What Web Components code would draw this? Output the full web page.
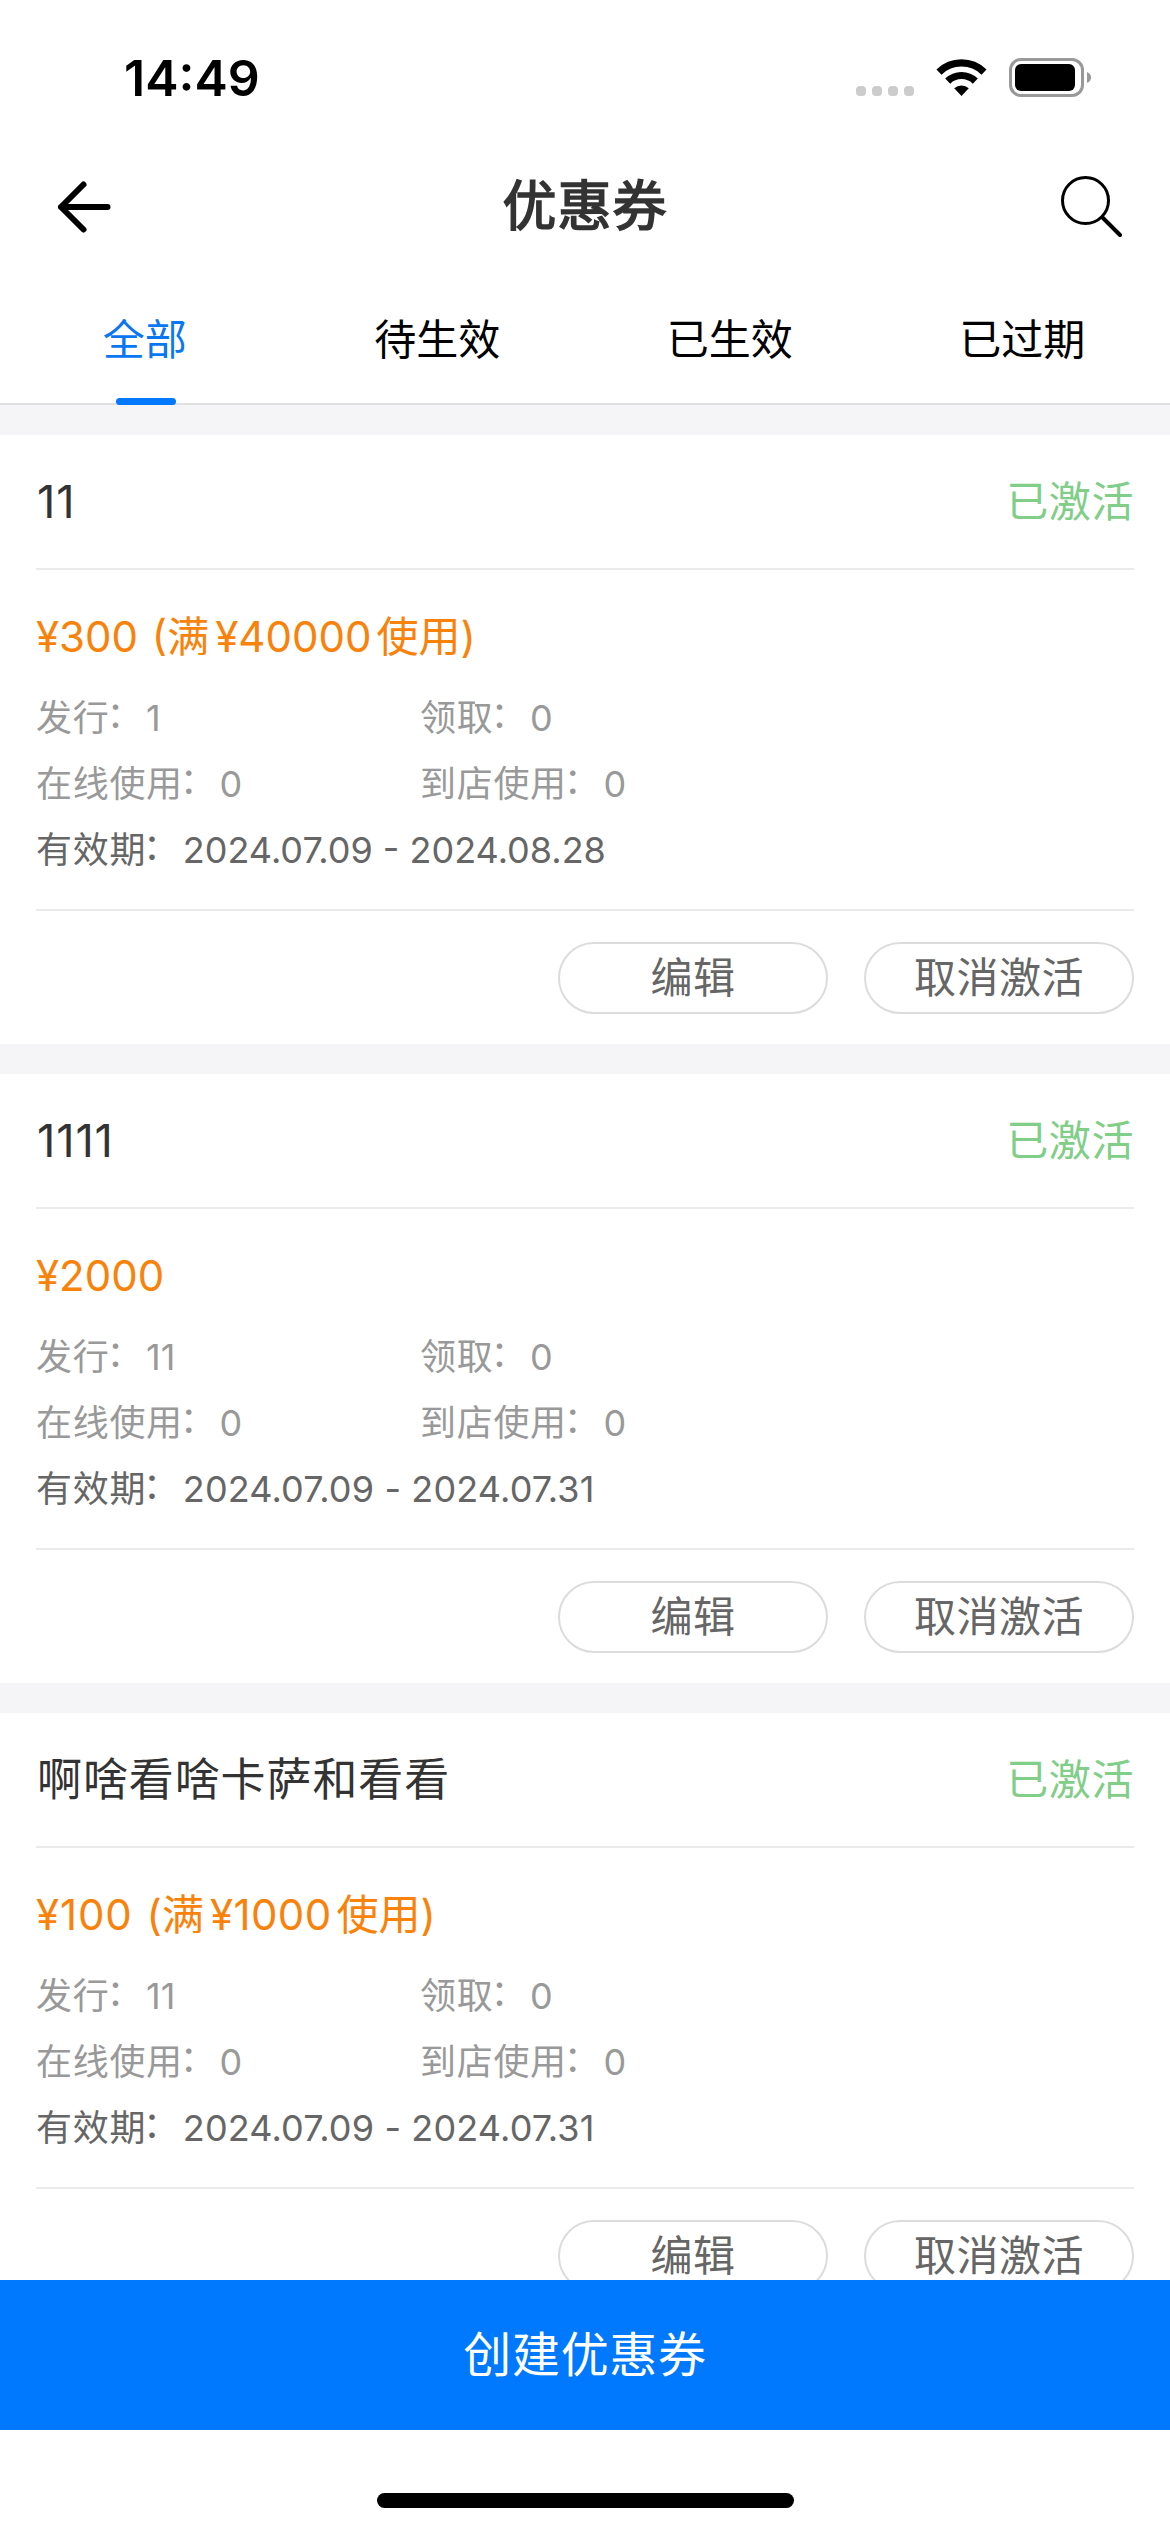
<!DOCTYPE html>
<html lang="zh-CN">
<head>
<meta charset="utf-8">
<title>优惠券</title>
<style>
html,body{margin:0;padding:0}
body{width:1170px;height:2532px;overflow:hidden;background:#fff;font-family:Inter,"Noto Sans CJK SC",sans-serif;color:#333}
</style>
</head>
<body>
<coupon-app></coupon-app>
<script>
const define = (name, html, init) => {
  const t = document.createElement('template');
  t.innerHTML = html;
  customElements.define(name, class extends HTMLElement {
    constructor() {
      super();
      this.attachShadow({ mode: 'open' }).append(t.content.cloneNode(true));
    }
    connectedCallback() { if (init) init(this, this.shadowRoot); }
  });
};

define('status-bar', `
<style>
:host{display:flex;height:156px;box-sizing:border-box;padding:0 79px 0 124px;justify-content:space-between;align-items:center}
.time{font-size:50px;line-height:60px;font-weight:600;color:#000}
svg{display:block}
</style>
<span class="time">14:49</span>
<svg width="236" height="44" viewBox="855 56 236 44">
  <g fill="#ccc"><rect x="856" y="86" width="10" height="10" rx="4"/><rect x="872" y="86" width="10" height="10" rx="4"/><rect x="888" y="86" width="10" height="10" rx="4"/><rect x="904" y="86" width="10" height="10" rx="4"/></g>
  <g fill="none" stroke="#000" stroke-width="7.2">
    <path d="M939 72.1A32.3 32.3 0 0 1 984 72.1"/>
    <path d="M947.7 81.1A19.8 19.8 0 0 1 975.3 81.1"/>
  </g>
  <path d="M961.5 96L954.2 88.3A10.6 10.6 0 0 1 968.8 88.3Z"/>
  <rect x="1010.5" y="59.5" width="72" height="36" rx="10.5" fill="none" stroke="#999" stroke-width="3"/>
  <rect x="1015" y="64" width="60" height="27" rx="6"/>
  <path d="M1087 72Q1091 73.5 1091 77.5T1087 83Z" fill="#999"/>
</svg>`);

define('nav-bar', `
<style>
:host{display:grid;grid-template-columns:1fr auto 1fr;height:102px;align-items:center;padding:0 48px 0 56px}
h1{margin:0;font-size:54px;line-height:64px;font-weight:400;-webkit-text-stroke:1.7px #333;letter-spacing:1px;color:#333;padding-right:8px}
svg{display:block}
.s{justify-self:end}
</style>
<svg width="56" height="56" viewBox="56 179 56 56" fill="none" stroke="#000" stroke-width="6" stroke-linecap="round" stroke-linejoin="round"><path d="M83.5 184.5L61 207L83.5 229.5M61 207H107.5"/></svg>
<h1><slot></slot></h1>
<svg class="s" width="62" height="66" viewBox="1060 174 62 66" fill="none" stroke="#000"><circle cx="1085.5" cy="200.5" r="23" stroke-width="3"/><path d="M1102.5 217.5L1120 235" stroke-width="4" stroke-linecap="round"/></svg>`);

define('tab-item', `
<style>
:host{display:flex;flex:1;flex-direction:column;align-items:center;justify-content:flex-end;color:#000;font-size:42px}
span{line-height:60px;margin-bottom:28px;padding-right:3px}
i{display:block;width:60px;height:7px;border-radius:3.5px;margin-bottom:-2px}
:host([active]){color:#0a77f2}
:host([active]) i{background:#0279ff}
</style>
<span><slot></slot></span><i></i>`);

define('tab-bar', `
<style>
:host{display:flex;height:145px;border-bottom:2px solid #e0e0e0;background:#fff}
</style>
<slot></slot>`);

define('pill-button', `
<style>
:host{display:block;box-sizing:border-box;width:270px;height:72px;border:2px solid #dcdcdc;border-radius:36px;text-align:center;font-size:42px;line-height:68px;letter-spacing:.5px;color:#666}
</style>
<slot></slot>`);

define('coupon-card', `
<style>
:host{display:block;box-sizing:border-box;height:609px;background:#fff;padding:0 36px;margin-bottom:30px}
header{display:flex;justify-content:space-between;align-items:center;height:133px;border-bottom:2px solid #ebebeb;line-height:60px}
.name{font-size:45px;color:#333;letter-spacing:.9px;padding-left:1px}
.state{font-size:42px;color:#80ce88;letter-spacing:.6px}
.body{box-sizing:border-box;height:341px;padding-top:34px;border-bottom:2px solid #ebebeb}
.price{font-size:42px;line-height:66px;margin-bottom:15px;color:#f9820b;white-space:pre;word-spacing:2px}
.row{display:flex;font-size:36px;line-height:66px;color:#999}
.row div{width:384px;white-space:nowrap}
.k{letter-spacing:.7px}
.k b{display:inline-block;font-weight:400;transform:translate(-3px,-3.5px)}
.date{color:#666}
footer{display:flex;justify-content:flex-end;gap:36px;padding-top:31px}
</style>
<header><span class="name"></span><span class="state">已激活</span></header>
<div class="body">
  <div class="price"></div>
  <div class="row"><div><span class="k">发行<b>：</b></span><span class="issued"></span></div><div><span class="k">领取<b>：</b></span>0</div></div>
  <div class="row"><div><span class="k">在线使用<b>：</b></span>0</div><div><span class="k">到店使用<b>：</b></span>0</div></div>
  <div class="row date"><span class="k">有效期<b>：</b></span><span class="v"></span></div>
</div>
<footer><pill-button>编辑</pill-button><pill-button>取消激活</pill-button></footer>`,
(el, root) => {
  const put = (sel, attr) => { root.querySelector(sel).textContent = el.getAttribute(attr); };
  put('.name', 'name');
  put('.issued', 'issued');
  put('.v', 'dates');
  if (el.getAttribute('dates').endsWith('1')) root.querySelector('.v').style.letterSpacing = '.14px';
  const money = (value, tracking) => {
    const s = document.createElement('span');
    s.textContent = '¥' + value;
    if (value.startsWith('1')) s.style.letterSpacing = tracking;
    return s;
  };
  const price = root.querySelector('.price');
  price.append(money(el.getAttribute('amount'), '.9px'));
  if (el.hasAttribute('min')) {
    const min = money(el.getAttribute('min'), '.4px');
    min.style.margin = '0 5px 0 6px';
    price.append(' (满', min, '使用)');
  }
});

define('create-bar', `
<style>
:host{display:block}
button{display:block;width:100%;height:150px;border:0;padding:0;background:#0079ff;color:#fff;font:48px/150px Inter,"Noto Sans CJK SC",sans-serif;letter-spacing:.7px}
.home{height:102px;background:#fff;display:flex;justify-content:center;align-items:flex-end}
.home i{display:block;width:417px;height:15px;border-radius:8px;background:#000;margin-bottom:24px}
</style>
<button><slot></slot></button>
<div class="home"><i></i></div>`);

define('coupon-app', `
<style>
:host{display:flex;flex-direction:column;width:1170px;height:2532px;background:#fff}
main{flex:1;min-height:0;overflow:hidden;background:#f5f5f7;padding-top:30px}
</style>
<status-bar></status-bar>
<nav-bar>优惠券</nav-bar>
<tab-bar><tab-item active>全部</tab-item><tab-item>待生效</tab-item><tab-item>已生效</tab-item><tab-item>已过期</tab-item></tab-bar>
<main>
  <coupon-card name="11" amount="300" min="40000" issued="1" dates="2024.07.09 - 2024.08.28"></coupon-card>
  <coupon-card name="1111" amount="2000" issued="11" dates="2024.07.09 - 2024.07.31"></coupon-card>
  <coupon-card name="啊啥看啥卡萨和看看" amount="100" min="1000" issued="11" dates="2024.07.09 - 2024.07.31"></coupon-card>
</main>
<create-bar>创建优惠券</create-bar>`);
</script>
</body>
</html>
